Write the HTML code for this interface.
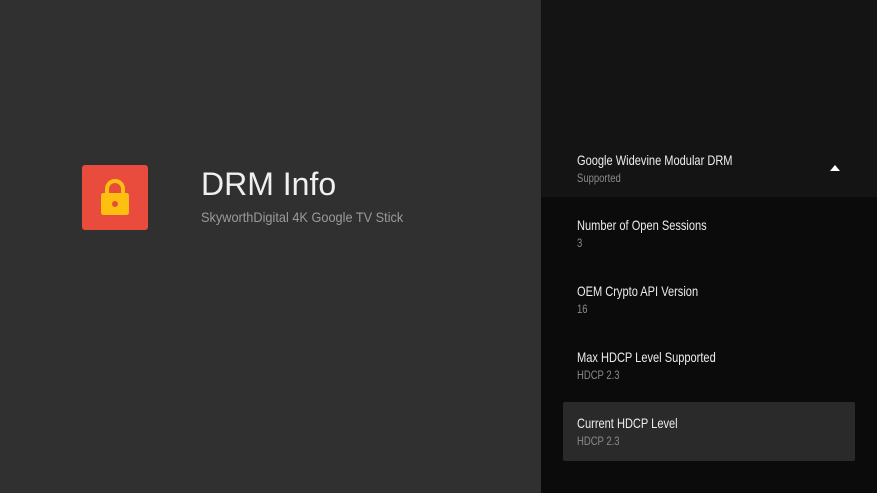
<!DOCTYPE html>
<html><head><style>
body{margin:0;width:877px;height:493px;overflow:hidden;background:#303030;font-family:"Liberation Sans",sans-serif;position:relative}
.right{position:absolute;left:541px;top:0;width:336px;height:493px;background:#0b0b0b}
.rtop{position:absolute;left:0;top:0;width:336px;height:197px;background:#141414}
.item{position:absolute;left:577px;transform:scaleX(0.79);transform-origin:0 0;white-space:nowrap}
.t{color:#ececec;font-size:14px;line-height:16px}
.s{color:#8a8a8a;font-size:12px;margin-top:3px;line-height:14px}
.card{position:absolute;left:563px;top:402px;width:292px;height:59px;background:#2a2a2a;border-radius:2px}
</style></head><body>
<div style="position:absolute;left:82px;top:165px;width:66px;height:65px;background:#e94c3d;border-radius:3px">
<svg width="66" height="65" viewBox="0 0 66 65"><path d="M25 30v-6a8 8 0 0 1 16 0v6" fill="none" stroke="#fdc010" stroke-width="4"/><rect x="19" y="28" width="28" height="22" rx="2.5" fill="#fdc010"/><circle cx="33" cy="39" r="3" fill="#e94c3d"/></svg>
</div>
<div style="position:absolute;left:201px;top:165px;color:#f0f0f0;font-size:32px;font-weight:300;line-height:38px">DRM Info</div>
<div style="position:absolute;left:201px;top:209px;color:#9a9a9a;font-size:14px;line-height:17px;transform:scaleX(0.91);transform-origin:0 0;white-space:nowrap">SkyworthDigital 4K Google TV Stick</div>
<div class="right"><div class="rtop"></div></div>
<div class="card"></div>
<div class="item" style="top:152px"><div class="t">Google Widevine Modular DRM</div><div class="s">Supported</div></div>
<svg style="position:absolute;left:829px;top:164px" width="12" height="8"><path d="M1 7L6 1L11 7Z" fill="#fff"/></svg>
<div class="item" style="top:217px"><div class="t">Number of Open Sessions</div><div class="s">3</div></div>
<div class="item" style="top:283px"><div class="t">OEM Crypto API Version</div><div class="s">16</div></div>
<div class="item" style="top:349px"><div class="t">Max HDCP Level Supported</div><div class="s">HDCP 2.3</div></div>
<div class="item" style="top:415px"><div class="t">Current HDCP Level</div><div class="s">HDCP 2.3</div></div>
</body></html>
